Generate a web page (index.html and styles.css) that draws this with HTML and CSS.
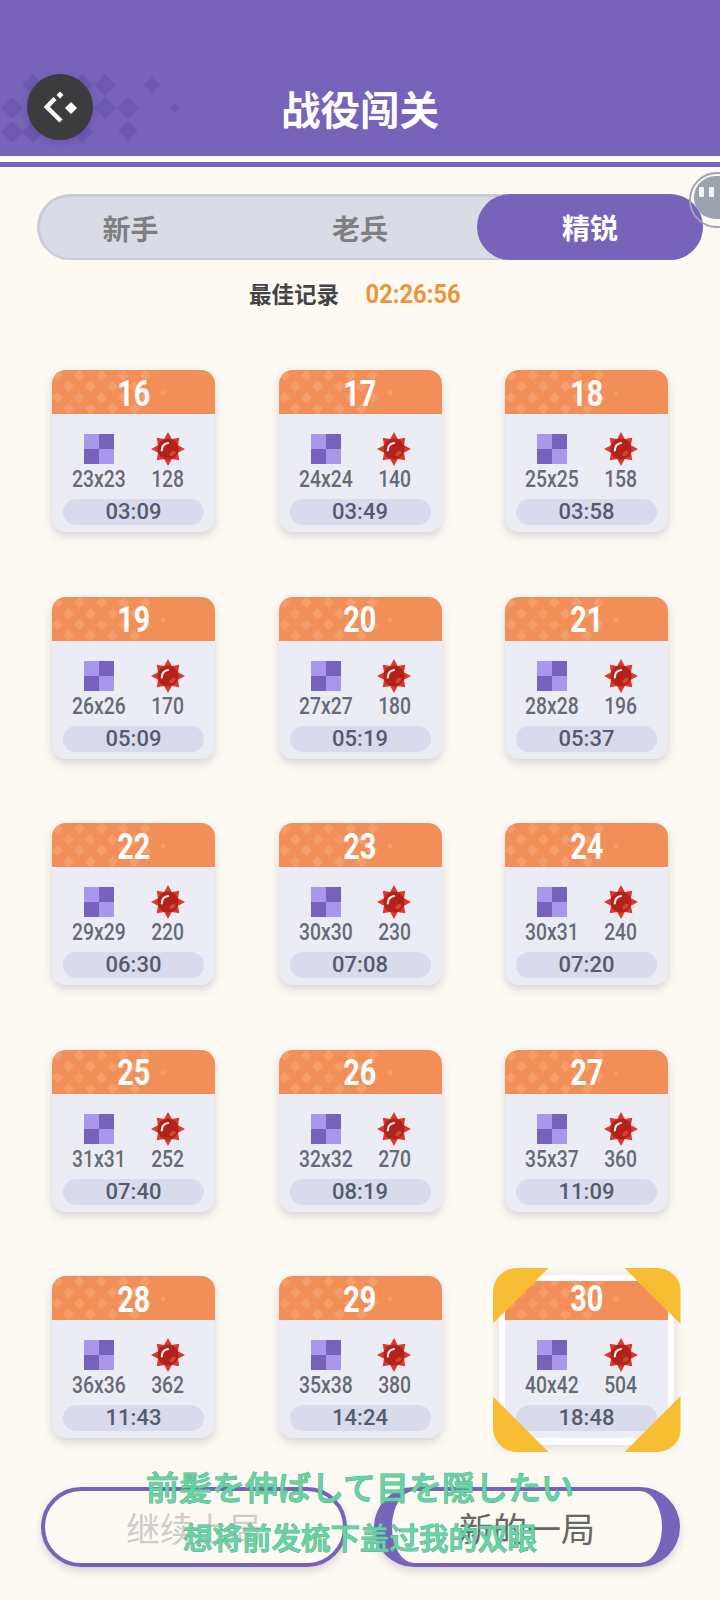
FILE: index.html
```html
<!DOCTYPE html>
<html>
<head>
    <title>战役闯关</title>
    <link rel="stylesheet" href="styles.css">
</head>
<body>
    <svg class="defs" width="0" height="0">
        <defs>
            <symbol id="tile" viewBox="0 0 30 30">
                <rect width="15" height="15" fill="#a897ea"/>
                <rect x="15" width="15" height="15" fill="#7661bd"/>
                <rect y="15" width="15" height="15" fill="#7661bd"/>
                <rect x="15" y="15" width="15" height="15" fill="#a897ea"/>
            </symbol>
            <symbol id="mine" viewBox="0 0 34 34">
                <polygon points="17,0 20.800,7 28.300,5.700 27,13.200 34,17 27,20.800 28.300,28.300 20.800,27 17,34 13.200,27 5.700,28.300 7,20.800 0,17 7,13.200 5.700,5.700 13.200,7" fill="#d93a30"/>
                <circle cx="17" cy="17" r="10.500" fill="#b3221a"/>
                <path d="M10.800 18.500c0-4 2.400-6.800 6.200-7.500" fill="none" stroke="#fdeee8" stroke-width="2.200" stroke-linecap="round"/>
                <ellipse cx="21.500" cy="21.500" rx="3.500" ry="2" fill="#d4452f" transform="rotate(-40 21.500 21.500)"/>
            </symbol>
            <pattern id="checks" width="22" height="22" patternUnits="userSpaceOnUse">
                <path d="M5.500 0l5.500 5.500-5.500 5.500-5.500-5.500z M16.500 11l5.500 5.500-5.500 5.500-5.500-5.500z" fill="#f59d6b"/>
            </pattern>
        </defs>
    </svg>

    <header class="topbar">
        <!-- faint diamonds behind the back button -->
        <svg class="topbar-pattern" viewBox="0 72 200 80">
            <path d="M12 97l11 11-11 11-11-11z M12 121l11 11-11 11-11-11z M33 74l11 11-11 11-11-11z M33 121l11 11-11 11-11-11z M82 74l11 11-11 11-11-11z M82 121l11 11-11 11-11-11z M105 74l11 11-11 11-11-11z M105 97l11 11-11 11-11-11z M128 97l11 11-11 11-11-11z M128 121l10 10-10 10-10-10z M152 77l8 8-8 8-8-8z M175 103l5 5-5 5-5-5z"/>
        </svg>
        <div class="back-btn">
            <svg width="36" height="36" viewBox="0 0 36 36">
                <path d="M13 9.500L4.800 18 19 32" fill="none" stroke="#fff" stroke-width="4.500"/>
                <path d="M18 2.500l3.500 3.500-3.500 3.500-3.500-3.500z M29 13l6 6-6 6-6-6z" fill="#fff"/>
            </svg>
        </div>
        <h1>战役闯关</h1>
    </header>
    <div class="topbar-rule"></div>

    <!-- difficulty tabs -->
    <div class="tabs">
        <div class="tab tab-first">新手</div>
        <div class="tab tab-second">老兵</div>
        <div class="tab active">精锐</div>
    </div>
    <div class="float-ball"><div class="float-face"><span></span><span></span></div></div>

    <div class="record">
        <span class="record-label">最佳记录</span>
        <span class="record-time">02:26:56</span>
    </div>

    <div class="levels" id="levels"></div>

    <div class="actions">
        <div class="btn btn-off">继续上局</div>
        <div class="btn btn-new">新的一局</div>
    </div>

    <div class="lyrics">
        <div class="lyric-ja">前髪を伸ばして目を隠したい</div>
        <div class="lyric-zh">想将前发梳下盖过我的双眼</div>
    </div>

    <script src="levels.js"></script>
</body>
</html>
```

FILE: levels.js
```js
const levels = [
    [16, '23x23', 128, '03:09'], [17, '24x24', 140, '03:49'], [18, '25x25', 158, '03:58'],
    [19, '26x26', 170, '05:09'], [20, '27x27', 180, '05:19'], [21, '28x28', 196, '05:37'],
    [22, '29x29', 220, '06:30'], [23, '30x30', 230, '07:08'], [24, '30x31', 240, '07:20'],
    [25, '31x31', 252, '07:40'], [26, '32x32', 270, '08:19'], [27, '35x37', 360, '11:09'],
    [28, '36x36', 362, '11:43'], [29, '35x38', 380, '14:24'], [30, '40x42', 504, '18:48']
];

const current = 30;

function levelCard(level) {
    const [num, size, mines, time] = level;
    const corners = num === current
        ? '<i class="corner tl"></i><i class="corner tr"></i><i class="corner bl"></i><i class="corner br"></i>'
        : '';
    return `<div class="card ${num === current ? 'current' : ''}">
        <div class="card-head">
            <svg class="card-pattern" viewBox="0 0 120 44">
                <rect width="100" height="44" fill="url(#checks)"/>
                <path d="M111 20l3 3-3 3-3-3z"/>
            </svg>
            <span class="narrow">${num}</span>
        </div>
        <div class="card-stats">
            <div class="stat">
                <div class="stat-icon"><svg width="30" height="30"><use href="#tile"/></svg></div>
                <span class="narrow">${size}</span>
            </div>
            <div class="stat">
                <div class="stat-icon"><svg width="34" height="34"><use href="#mine"/></svg></div>
                <span class="narrow">${mines}</span>
            </div>
        </div>
        <div class="card-time">${time}</div>
        ${corners}
    </div>`;
}

document.getElementById('levels').innerHTML = levels.map(levelCard).join('');
```

FILE: styles.css
```css
* { box-sizing: border-box; }
body { margin: 0; width: 720px; height: 1600px; overflow: hidden; position: relative; background: #fdfaf4; font-family: "Noto Sans CJK SC", "Noto Sans", sans-serif; }
.defs { position: absolute; }
.narrow { display: inline-block; transform: scaleX(0.84); }

.topbar { height: 156px; background: #7763b9; display: flex; align-items: flex-end; justify-content: center; padding-bottom: 22px; position: relative; }
.topbar h1 { margin: 0; color: #fff; font-size: 39.500px; line-height: 52px; font-weight: 700; }
.topbar-pattern { position: absolute; left: 0; top: 72px; width: 200px; height: 80px; fill: #6d59b1; }
.back-btn { position: absolute; left: 27px; top: 74px; width: 66px; height: 66px; border-radius: 50%; background: #3c3b3d; box-shadow: 0 2px 6px rgba(70, 50, 130, 0.3); display: flex; align-items: center; justify-content: center; }
.back-btn svg { display: block; }
.topbar-rule { height: 11px; border-top: 6px solid #fff; background: #7763b9; }

.tabs { margin: 27px 0 0 37px; width: 666px; height: 66px; border-radius: 33px; background: #d9dbe7; border: 3px solid #cacbd9; border-bottom-width: 2px; display: flex; }
.tab { display: flex; align-items: center; justify-content: center; font-size: 28px; font-weight: 700; color: #7f7f7f; }
.tab-first { width: 181px; }
.tab-second { width: 278px; }
.tab.active { width: 226px; margin: -3px -3px -2px -22px; background: #7763b9; color: #fff; border-radius: 33px; }

.float-ball { position: absolute; left: 689px; top: 172px; width: 56px; height: 56px; border-radius: 50%; border: 2px solid #a2a3ad; padding: 2px 0 0 3px; }
.float-face { width: 52px; height: 43px; border-radius: 24px; background: #9ba3b0; display: flex; gap: 5px; padding: 11px 0 0 5px; }
.float-face span { width: 5px; height: 10px; background: #f6f6f6; border-radius: 1px; }

.record { margin-top: 15px; height: 36px; display: flex; align-items: baseline; justify-content: center; gap: 26px; padding-right: 10px; }
.record-label { font-size: 22.500px; line-height: 36px; font-weight: 700; color: #444; }
.record-time { font-family: Roboto, sans-serif; font-size: 25px; font-weight: 700; color: #ee9438; transform: scaleX(0.95); margin: 0 -2px; }

.levels { margin: 59px 0 0 52px; display: grid; grid-template-columns: repeat(3, 163px); grid-auto-rows: 162px; column-gap: 63.500px; row-gap: 64.500px; }
.card { position: relative; border-radius: 14px; background: #ecedf4; box-shadow: 0 4px 10px rgba(70, 60, 90, 0.2); font-family: Roboto, sans-serif; }
.card-head { height: 44px; background: #f28f58; border-radius: 14px 14px 0 0; overflow: hidden; position: relative; display: flex; align-items: center; justify-content: center; padding-top: 3px; color: #fff; font-size: 36px; line-height: 44px; font-weight: 700; }
.card-head .narrow { position: relative; transform: scaleX(0.8); }
.card-pattern { position: absolute; left: 0; top: 0; width: 120px; height: 44px; fill: #f59d6b; }
.card-stats { display: flex; justify-content: center; gap: 10.500px; padding-top: 18px; }
.stat { width: 58px; display: flex; flex-direction: column; align-items: center; color: #666a75; font-size: 23px; line-height: 24px; font-weight: 500; white-space: nowrap; }
.stat-icon { height: 34px; margin-bottom: 2px; display: flex; align-items: center; }
.stat-icon svg { display: block; }
.card-time { margin: 7px 11px 0; height: 26px; border-radius: 13px; background: #d9dbec; text-align: center; color: #555a6d; font-size: 22px; line-height: 26px; font-weight: 500; }

/* selected level: white frame and yellow corner flags */
.card.current { box-shadow: none; }
.card.current::before { content: ""; position: absolute; z-index: -1; left: -6px; right: -6px; top: -1px; bottom: -7px; background: #fff; box-shadow: 0 2px 10px rgba(70, 60, 90, 0.2); }
.current .card-head { border-top: 5px solid #fff; border-radius: 0; padding-top: 0; }
.current .card-head .narrow { top: -2px; }
.current .card-pattern { top: -5px; }
.corner { position: absolute; width: 56px; height: 56px; background: #f7bd33; }
.corner.tl { left: -12.500px; top: -8px; border-top-left-radius: 24px; clip-path: polygon(0 0, 100% 0, 0 100%); }
.corner.tr { right: -12.500px; top: -8px; border-top-right-radius: 24px; clip-path: polygon(0 0, 100% 0, 100% 100%); }
.corner.bl { left: -12.500px; bottom: -14px; border-bottom-left-radius: 24px; clip-path: polygon(0 0, 100% 100%, 0 100%); }
.corner.br { right: -12.500px; bottom: -14px; border-bottom-right-radius: 24px; clip-path: polygon(100% 0, 100% 100%, 0 100%); }

.actions { position: absolute; left: 41px; top: 1487px; width: 639px; display: flex; justify-content: space-between; }
.btn { height: 80px; width: 306px; border-radius: 40px; border-style: solid; border-color: #7763b9; background: #fdfaf4; display: flex; align-items: center; justify-content: center; font-size: 34px; box-shadow: 0 4px 8px rgba(70, 60, 90, 0.2); }
.btn-off { border-width: 4px; color: #cfcdcb; }
.btn-new { border-width: 4px 18px; color: #666; }

/* lyric overlay */
.lyrics { position: absolute; left: 0; top: 1462px; width: 720px; text-align: center; color: #66d4a2; font-family: "Noto Sans CJK JP", sans-serif; font-weight: 500; -webkit-text-stroke: 1px #52b08c; paint-order: stroke fill; }
.lyric-ja { font-size: 33px; line-height: 48px; }
.lyric-zh { font-size: 29.500px; line-height: 44px; margin-top: 4px; font-family: "Noto Sans CJK SC", sans-serif; }
```
